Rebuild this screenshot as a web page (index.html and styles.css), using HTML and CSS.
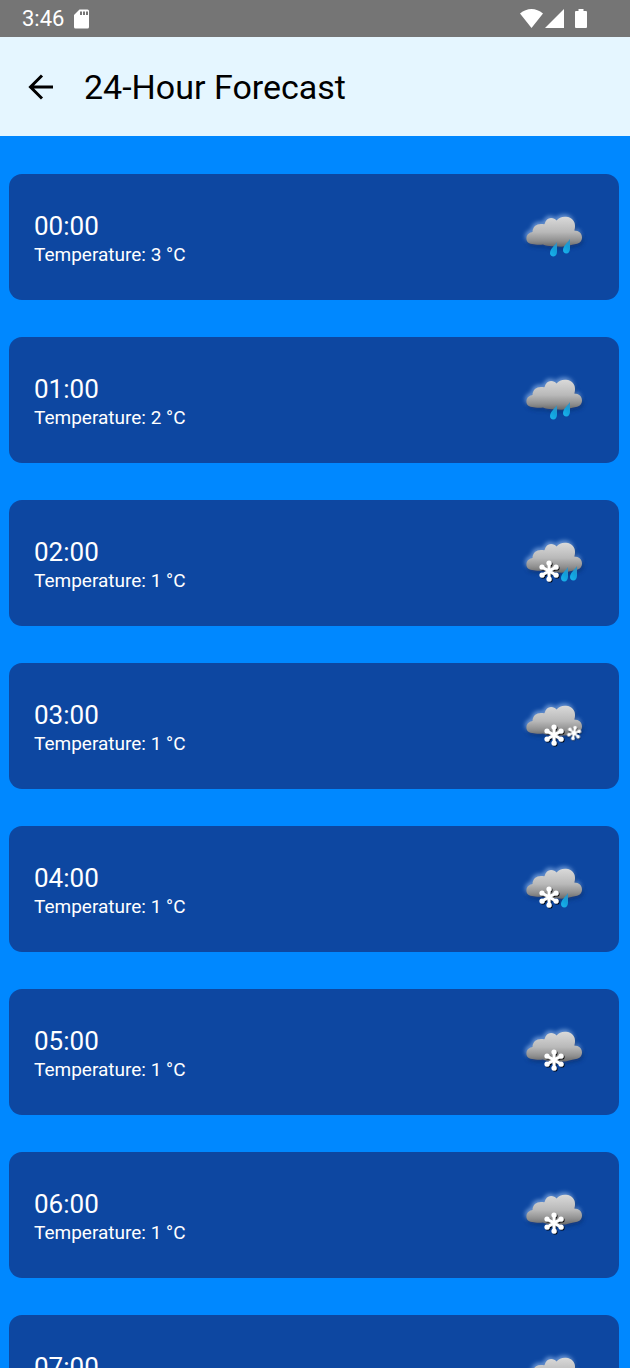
FILE: index.html
```html
<!DOCTYPE html>
<html lang="en">
<head>
<meta charset="utf-8">
<meta name="viewport" content="width=device-width, initial-scale=1">
<title>24-Hour Forecast</title>
<link rel="stylesheet" href="styles.css">
</head>
<body>
<svg class="defs" aria-hidden="true">
  <defs>
    <linearGradient id="cloud-fill" gradientUnits="userSpaceOnUse" x1="0" y1="16" x2="0" y2="46">
      <stop offset="0" stop-color="#d9d9d9"/>
      <stop offset="0.5" stop-color="#b9b9b9"/>
      <stop offset="0.8" stop-color="#8f8f8f"/>
      <stop offset="1" stop-color="#666"/>
    </linearGradient>
    <linearGradient id="drop-fill" x1="0.8" y1="0" x2="0.3" y2="1">
      <stop offset="0" stop-color="#3a8fbd"/>
      <stop offset="0.5" stop-color="#119fdb"/>
      <stop offset="1" stop-color="#19b0ea"/>
    </linearGradient>
    <filter id="soft" x="-30%" y="-30%" width="160%" height="160%"><feGaussianBlur stdDeviation="2"/></filter>
    <filter id="edge" x="-10%" y="-10%" width="120%" height="120%"><feGaussianBlur stdDeviation="0.4"/></filter>
    <filter id="flake-shadow" x="-30%" y="-30%" width="160%" height="160%"><feDropShadow dx="1" dy="1" stdDeviation="0.6" flood-color="#000" flood-opacity="0.9"/></filter>
    <path id="cloud-shape" d="M22 43C18 42.500 16 40 16.500 36.500C17 33 20 31.500 22.500 31C22.500 25.500 27 22.500 32 23C33 23 34 23.500 34.500 23C35.500 19 38 17 41 17C43.500 17 45.500 18 46.500 19.500C48.500 17 52 15.500 56 15.800C62 16.300 65.500 20.500 65 26C64.900 27.500 64.600 28.500 64.300 29.500C69 29.500 72 32.500 72 36.500C72 40 69.500 42.500 66 43C63.500 43.500 61 44 59 44.500C55 46 49 46 45 45C41 45.500 36 45 33 43.500C30 43.800 25 43.800 22 43Z"/>
    <g id="cloud">
      <use href="#cloud-shape" fill="#b0d4ff" opacity="0.65" filter="url(#soft)" transform="translate(-1 -2)"/>
      <use href="#cloud-shape" fill="#082a66" opacity="0.7" filter="url(#soft)" transform="translate(1 2)"/>
      <use href="#cloud-shape" fill="url(#cloud-fill)" filter="url(#edge)"/>
    </g>
    <path id="drop" d="M7 0C5 3 0 7 0 11C0 13.200 1.400 14.500 3.300 14.500C5.600 14.500 6.800 12.500 7 10Z" fill="url(#drop-fill)"/>
    <g id="flake" filter="url(#flake-shadow)" fill="#fff" stroke="#fff" stroke-width="2.800">
      <path d="M0-8V8M-7-4L7 4M-7 4L7-4"/>
      <g stroke="none"><circle cy="-8" r="2.600"/><circle cy="8" r="2.600"/><circle cx="-7" cy="-4" r="2.600"/><circle cx="7" cy="4" r="2.600"/><circle cx="-7" cy="4" r="2.600"/><circle cx="7" cy="-4" r="2.600"/></g>
    </g>
  </defs>
</svg>
<div class="status">
  <span class="clock">3:46</span>
  <svg class="sd" viewBox="0 0 16 20" aria-hidden="true"><path fill="#fff" d="M5.500 0.500H13.500Q15 0.500 15 2V18Q15 19.500 13.500 19.500H1.500Q0 19.500 0 18V6Z"/><path fill="#757575" d="M6 2.500h2V6H6zM9 2.500h2V6H9zM12 2.500h2V6h-2z"/></svg>
  <svg class="signals" viewBox="0 0 68 20" aria-hidden="true"><path fill="#fff" d="M0 4.500C7-1.500 16-1.500 23 4.500L11.500 19ZM44 0V19H25ZM58.500 0h5v2H66q1 0 1 1V18q0 1-1 1H56q-1 0-1-1V3q0-1 1-1h2.500z"/></svg>
</div>
<header class="bar">
  <button class="back" type="button" aria-label="Back"><svg viewBox="0 0 26 26" aria-hidden="true"><path d="M25 13H3M14 1.500L2.500 13L14 24.500" fill="none" stroke="#000" stroke-width="3"/></svg></button>
  <h1>24-Hour Forecast</h1>
</header>
<main class="list">
  <article class="card"><div class="info"><h2>00:00</h2><p>Temperature: 3 °C</p></div><svg class="weather" viewBox="0 0 90 70" role="img" aria-label="Rain"><use href="#cloud"/><use href="#drop" x="40" y="41"/><use href="#drop" x="53" y="38"/></svg></article>
  <article class="card"><div class="info"><h2>01:00</h2><p>Temperature: 2 °C</p></div><svg class="weather" viewBox="0 0 90 70" role="img" aria-label="Rain"><use href="#cloud"/><use href="#drop" x="40" y="41"/><use href="#drop" x="53" y="38"/></svg></article>
  <article class="card"><div class="info"><h2>02:00</h2><p>Temperature: 1 °C</p></div><svg class="weather" viewBox="0 0 90 70" role="img" aria-label="Sleet"><use href="#cloud"/><use href="#drop" x="51" y="40"/><use href="#drop" x="60" y="39"/><use href="#flake" x="39" y="44"/></svg></article>
  <article class="card"><div class="info"><h2>03:00</h2><p>Temperature: 1 °C</p></div><svg class="weather" viewBox="0 0 90 70" role="img" aria-label="Snow"><use href="#cloud"/><use href="#flake" x="44" y="45"/><use href="#flake" transform="translate(64 43) rotate(12) scale(.68)"/></svg></article>
  <article class="card"><div class="info"><h2>04:00</h2><p>Temperature: 1 °C</p></div><svg class="weather" viewBox="0 0 90 70" role="img" aria-label="Light sleet"><use href="#cloud"/><use href="#drop" x="51" y="40"/><use href="#flake" x="39" y="44"/></svg></article>
  <article class="card"><div class="info"><h2>05:00</h2><p>Temperature: 1 °C</p></div><svg class="weather" viewBox="0 0 90 70" role="img" aria-label="Light snow"><use href="#cloud"/><use href="#flake" x="44" y="44"/></svg></article>
  <article class="card"><div class="info"><h2>06:00</h2><p>Temperature: 1 °C</p></div><svg class="weather" viewBox="0 0 90 70" role="img" aria-label="Light snow"><use href="#cloud"/><use href="#flake" x="44" y="44"/></svg></article>
  <article class="card"><div class="info"><h2>07:00</h2></div><svg class="weather" viewBox="0 0 90 70" role="img" aria-label="Cloudy"><use href="#cloud"/></svg></article>
</main>
</body>
</html>
```
FILE: styles.css
```css
* { box-sizing: border-box; }
body {
  margin: 0;
  height: 100vh;
  display: flex;
  flex-direction: column;
  overflow: hidden;
  background: #0088ff;
  color: #fff;
  font-family: Roboto, sans-serif;
}
h1, h2, p { margin: 0; font-weight: 400; }
.defs { position: absolute; width: 0; height: 0; }
.status {
  flex: none;
  display: flex;
  align-items: center;
  gap: 10px;
  height: 37px;
  padding: 0 42px 0 22px;
  background: #757575;
}
.clock { font-size: 22px; line-height: 26px; }
.sd { width: 16px; height: 20px; }
.signals { width: 68px; height: 20px; margin-left: auto; }
.bar {
  flex: none;
  display: flex;
  align-items: center;
  gap: 18px;
  height: 99px;
  padding: 0 16px;
  background: #e5f6ff;
  color: #000;
}
.back {
  display: flex;
  align-items: center;
  justify-content: center;
  width: 50px;
  height: 50px;
  padding: 0;
  border: 0;
  background: none;
}
.back svg { width: 26px; height: 26px; }
h1 { font-size: 34px; line-height: 44px; }
.list {
  flex: 1;
  min-height: 0;
  display: flex;
  flex-direction: column;
  gap: 37px;
  padding: 38px 11px 0 9px;
  overflow-y: auto;
  scrollbar-width: none;
}
.card {
  flex: none;
  display: flex;
  align-items: flex-start;
  justify-content: space-between;
  min-height: 126px;
  padding: 0 19px 0 25px;
  border-radius: 13px;
  background: #0d47a1;
}
.info { padding: 37px 0 31px; }
.info h2 { font-size: 26px; line-height: 30px; }
.info p { font-size: 19px; line-height: 28px; }
.weather { width: 90px; height: 70px; margin-top: 27px; }
```
